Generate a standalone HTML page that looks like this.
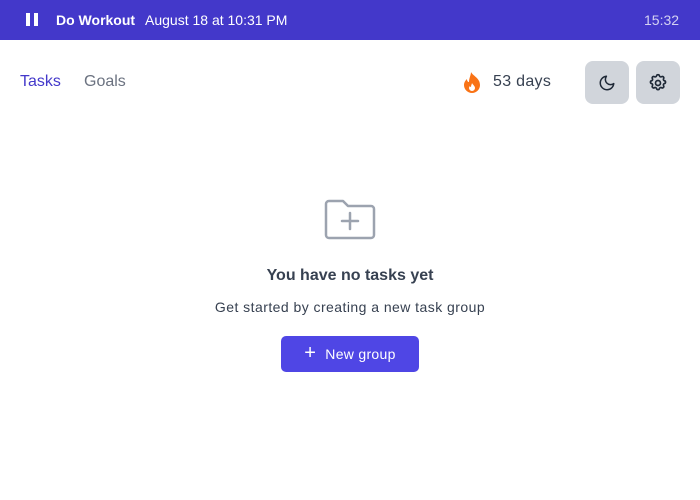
<!DOCTYPE html>
<html><head><style>
*{margin:0;padding:0;box-sizing:border-box}
body{width:700px;height:500px;background:#fff;font-family:"Liberation Sans",sans-serif;position:relative;overflow:hidden}
.bar{position:absolute;left:0;top:0;width:700px;height:40px;background:#4338ca;color:#fff}
.abs{position:absolute;white-space:nowrap}
.btn{position:absolute;top:61px;width:44px;height:43px;background:#d1d5db;border-radius:8px;display:flex;align-items:center;justify-content:center}
</style></head><body>
<div class="bar">
<div class="abs" style="left:26px;top:13px;width:4px;height:13px;background:#fff"></div>
<div class="abs" style="left:34px;top:13px;width:4px;height:13px;background:#fff"></div>
<div class="abs" style="left:56px;top:12px;font-size:14px;font-weight:bold">Do Workout</div>
<div class="abs" style="left:145px;top:12px;font-size:14px">August 18 at 10:31 PM</div>
<div class="abs" style="left:644px;top:12px;font-size:14px;color:#d4d2f2">15:32</div>
</div>
<div class="abs" style="left:20px;top:73px;font-size:16px;color:#4338ca">Tasks</div>
<div class="abs" style="left:84px;top:73px;font-size:16px;color:#6b7280">Goals</div>
<svg class="abs" style="left:462px;top:71px" width="20" height="22" viewBox="0 0 20 22"><path d="M9 1c2 4 9 6 9 13a8 8 0 0 1-16 0c0-3 2-5 3-6 0 2 1 3 2 3 0-4 2-7 2-10z" fill="#f97316"/><path d="M10 12c1 2 3 3 3 5a3 3 0 0 1-6 0c0-1 1-2 1-2 0 1 1 1 1 1 0-2 1-3 1-4z" fill="#fff"/></svg>
<div class="abs" style="left:493px;top:73px;font-size:16px;color:#374151;letter-spacing:0.3px">53 days</div>
<div class="btn" style="left:585px"><svg width="18" height="18" viewBox="0 0 24 24" fill="none" stroke="#1f2937" stroke-width="2" stroke-linecap="round" stroke-linejoin="round"><path d="M21 12.8A9 9 0 1 1 11.2 3 7 7 0 0 0 21 12.8z"/></svg></div>
<div class="btn" style="left:636px"><svg width="20" height="20" viewBox="0 0 24 24" fill="none" stroke="#1f2937" stroke-width="2" stroke-linejoin="round"><path d="M10.3 3.3c.4-1.7 3-1.7 3.4 0a1.7 1.7 0 0 0 2.6 1.1c1.5-.9 3.3.8 2.4 2.4a1.7 1.7 0 0 0 1 2.5c1.8.4 1.8 3 0 3.4a1.7 1.7 0 0 0-1 2.6c.9 1.5-.9 3.300-2.4 2.4a1.7 1.7 0 0 0-2.6 1c-.4 1.8-3 1.8-3.4 0a1.7 1.7 0 0 0-2.6-1c-1.5.9-3.3-.9-2.4-2.4a1.7 1.7 0 0 0-1-2.6c-1.8-.4-1.8-3 0-3.4a1.7 1.7 0 0 0 1-2.5c-.9-1.6.9-3.3 2.4-2.4a1.7 1.7 0 0 0 2.6-1.1z"/><circle cx="12" cy="12" r="3"/></svg></div>
<svg class="abs" style="left:324px;top:199px" width="52" height="42" viewBox="0 0 52 42" fill="none" stroke="#9ca3af" stroke-width="2.5" stroke-linecap="round" stroke-linejoin="round"><path d="M2 5a3 3 0 0 1 3-3h14l5 5h23a3 3 0 0 1 3 3v26a3 3 0 0 1-3 3H5a3 3 0 0 1-3-3z"/><path d="M26 14v16M18 22h16"/></svg>
<div class="abs" style="left:0;width:700px;text-align:center;top:267px;font-size:16px;font-weight:bold;color:#374151">You have no tasks yet</div>
<div class="abs" style="left:0;width:700px;text-align:center;top:299px;font-size:14px;color:#374151;letter-spacing:0.45px">Get started by creating a new task group</div>
<div class="abs" style="left:281px;top:336px;width:138px;height:36px;background:#4f46e5;border-radius:5px;color:#fff;font-size:14px;display:flex;align-items:center;justify-content:center;gap:9px;letter-spacing:0.3px"><span style="font-size:20px;line-height:1;margin-top:-2px">+</span>New group</div>
</body></html>
